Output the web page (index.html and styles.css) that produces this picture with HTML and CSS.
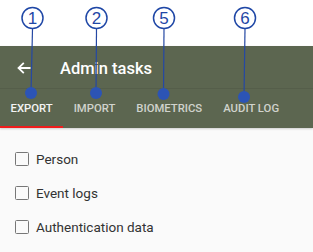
FILE: index.html
```html
<!DOCTYPE html>
<html lang="en">
<head>
<meta charset="utf-8">
<title>Admin tasks</title>
<link rel="stylesheet" href="styles.css">
</head>
<body>
<div class="screen">
  <div class="top-space"></div>
  <header class="appbar">
    <div class="toolbar">
      <svg class="back" width="14" height="12" viewBox="0 0 14 12" aria-hidden="true">
        <path d="M13.5 6H2 M6.8 0.8L1.5 6l5.3 5.2" fill="none" stroke="#ffffff" stroke-width="1.8"/>
      </svg>
      <h1 class="title">Admin tasks</h1>
    </div>
    <nav class="tabs">
      <div class="tab active">EXPORT</div>
      <div class="tab">IMPORT</div>
      <div class="tab">BIOMETRICS</div>
      <div class="tab">AUDIT LOG</div>
    </nav>
  </header>
  <main class="list">
    <label class="row"><span class="box"></span><span class="label">Person</span></label>
    <label class="row"><span class="box"></span><span class="label">Event logs</span></label>
    <label class="row"><span class="box"></span><span class="label">Authentication data</span></label>
  </main>
</div>
<svg class="annotations" width="313" height="252" viewBox="0 0 313 252" aria-hidden="true">
  <g stroke="#2548a3" stroke-width="1.2" fill="none">
    <line x1="32.5" y1="29" x2="31" y2="93"/>
    <line x1="96.5" y1="29" x2="96" y2="93"/>
    <line x1="164" y1="29" x2="163.5" y2="94"/>
    <line x1="245" y1="29" x2="244" y2="97"/>
  </g>
  <g stroke="#1f47a6" stroke-width="1.5" fill="#ffffff">
    <circle cx="32.5" cy="18" r="10.5"/>
    <circle cx="96.5" cy="18" r="10.5"/>
    <circle cx="164" cy="18" r="10.5"/>
    <circle cx="245" cy="18" r="10.5"/>
  </g>
  <g class="num" fill="#1f47a6" text-anchor="middle">
    <text x="32.5" y="24">1</text>
    <text x="96.5" y="24">2</text>
    <text x="164" y="24">5</text>
    <text x="245" y="24">6</text>
  </g>
  <g fill="#2c54b5">
    <circle cx="31" cy="93" r="6"/>
    <circle cx="96" cy="93" r="6"/>
    <circle cx="163.5" cy="94" r="6"/>
    <circle cx="244" cy="97" r="6"/>
  </g>
</svg>
</body>
</html>
```

FILE: styles.css
```css
html, body {
  margin: 0;
  padding: 0;
}
body {
  width: 313px;
  height: 252px;
  overflow: hidden;
  background: #ffffff;
  font-family: Roboto, "Liberation Sans", Arial, sans-serif;
  position: relative;
}
.screen {
  display: flex;
  flex-direction: column;
  height: 252px;
}
.top-space {
  height: 46px;
  background: #ffffff;
}
.appbar {
  background: #5c6650;
  box-shadow: 0 1px 2px rgba(0, 0, 0, 0.18);
  position: relative;
  z-index: 1;
}
.toolbar {
  height: 43px;
  display: flex;
  align-items: center;
  padding-left: 17px;
  border-bottom: 1px solid rgba(0, 0, 0, 0.07);
  box-sizing: border-box;
}
.back {
  display: block;
  margin-top: 1px;
}
.title {
  margin: 0 0 0 29px;
  font-size: 16.5px;
  font-weight: 500;
  color: #ffffff;
  padding-top: 2px;
}
.tabs {
  display: flex;
  height: 39px;
}
.tab {
  display: flex;
  align-items: center;
  padding: 2px 10.5px 0;
  font-size: 11.3px;
  font-weight: 500;
  color: rgba(255, 255, 255, 0.72);
  border-bottom: 2px solid transparent;
  box-sizing: border-box;
}
.tab.active {
  color: #f4f4f4;
  border-bottom-color: #f01c1c;
}
.list {
  flex: 1;
  background: #fafafa;
  padding-top: 14px;
  display: flex;
  flex-direction: column;
}
.row {
  height: 34px;
  display: flex;
  align-items: center;
  padding-left: 15px;
}
.box {
  width: 14px;
  height: 14px;
  border: 1.6px solid #777777;
  border-radius: 1.5px;
  box-sizing: border-box;
}
.label {
  margin-left: 7px;
  font-size: 13.5px;
  color: #333333;
}
.annotations {
  position: absolute;
  top: 0;
  left: 0;
  z-index: 2;
}
.num {
  font-family: "Liberation Sans", Arial, sans-serif;
  font-size: 17px;
}
```
